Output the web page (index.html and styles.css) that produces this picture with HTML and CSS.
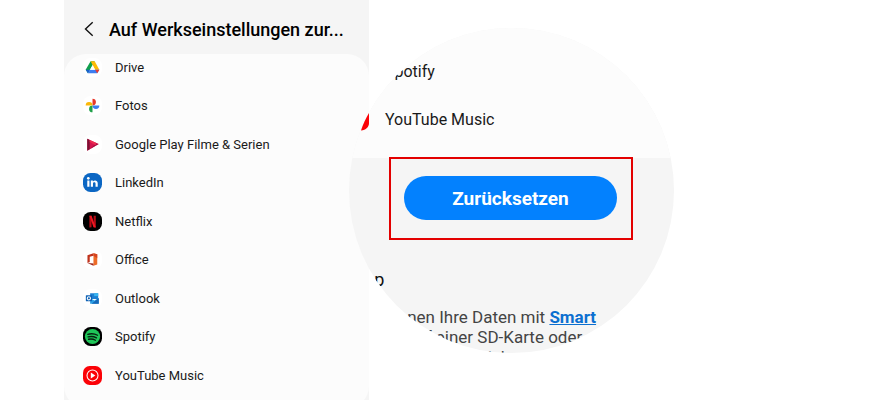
FILE: index.html
```html
<!DOCTYPE html>
<html lang="de">
<head>
    <meta charset="utf-8">
    <title>Auf Werkseinstellungen zurücksetzen</title>
    <link rel="stylesheet" href="styles.css">
</head>
<body>
    <main class="stage">

        <section class="phone">
            <header class="header">
                <button class="back" type="button" aria-label="Zurück">
                    <svg width="10" height="16" viewBox="0 0 10 16"><path d="M8.700 1.200 1.500 8l7.200 6.800" fill="none" stroke="#111" stroke-width="1.400"/></svg>
                </button>
                <h1 class="title">Auf Werkseinstellungen zur...</h1>
            </header>

            <div class="panel">
                <ul class="apps">
                    <li class="app">
                        <svg class="icon" viewBox="0 0 20 20">
                            <rect width="20" height="20" rx="8" fill="#fff"/>
                            <path d="M8 3.500h4.300L7.300 12.300 5.200 16 2.800 12.300z" fill="#11a04d"/>
                            <path d="M8 3.500h4.300L17.200 12.300h-4.400z" fill="#fdba04"/>
                            <path d="M7.200 12.300H17.200L15 16H5.200z" fill="#3c7df0"/>
                            <path d="M2.800 12.300h4.400L5.200 16z" fill="#1a5fd0"/>
                            <path d="M12.800 12.300h4.400L15 16z" fill="#ea3a2d"/>
                            <path d="M10.100 7.600 12.700 12.300H7.500z" fill="#fff"/>
                        </svg>
                        <span>Drive</span>
                    </li>
                    <li class="app">
                        <svg class="icon" viewBox="0 0 20 20">
                            <rect width="20" height="20" rx="8" fill="#fff"/>
                            <path d="M10 2.800a3.600 3.600 0 0 1 0 7.200z" fill="#e8372b"/>
                            <path d="M17.200 10a3.600 3.600 0 0 1-7.200 0z" fill="#3b7df0"/>
                            <path d="M10 17.200a3.600 3.600 0 0 1 0-7.200z" fill="#20a04a"/>
                            <path d="M2.800 10a3.600 3.600 0 0 1 7.200 0z" fill="#fbb808"/>
                        </svg>
                        <span>Fotos</span>
                    </li>
                    <li class="app">
                        <svg class="icon" viewBox="0 0 20 20">
                            <rect width="20" height="20" rx="8" fill="#fff"/>
                            <path d="M4.500 4 16.500 9.500 4.500 16.500z" fill="#d5144f"/>
                            <path d="M4.500 4 7 5.200v9.800L4.500 16.500z" fill="#7b1233"/>
                            <path d="M7 15 13.500 9l3 .5z" fill="#a30f40"/>
                            <path d="M7 5.200l6.500 3V11L7 7z" fill="#ee2b50"/>
                        </svg>
                        <span>Google Play Filme &amp; Serien</span>
                    </li>
                    <li class="app">
                        <svg class="icon" viewBox="0 0 20 20">
                            <rect width="20" height="20" rx="8" fill="#0b66c3"/>
                            <circle cx="5.600" cy="5.600" r="1.400" fill="#fff"/>
                            <path d="M4.500 8h2.300v6.500H4.500zM8.200 8h2.200v1c1.300-2 5.100-1.600 5.100 1.700v3.800h-2.300v-3.400c0-2-2.700-1.900-2.700 0v3.400H8.200z" fill="#fff"/>
                        </svg>
                        <span>LinkedIn</span>
                    </li>
                    <li class="app">
                        <svg class="icon" viewBox="0 0 20 20">
                            <rect width="20" height="20" rx="8" fill="#000"/>
                            <path d="M6.700 4H9v12l-2.300.3zM11.200 4h2.300v12.300l-2.300-.3z" fill="#b50b14"/>
                            <path d="M6.700 4H9l4.500 12.300-2.400-.3z" fill="#ee1722"/>
                        </svg>
                        <span>Netflix</span>
                    </li>
                    <li class="app">
                        <svg class="icon" viewBox="0 0 20 20">
                            <rect width="20" height="20" rx="8" fill="#fff"/>
                            <path d="M11 3.300 4.700 5.600v8.200l2.400-1.200V7.200L11 6z" fill="#c0331c"/>
                            <path d="M11 3.300l4 1.300v10.600l-4 1.300z" fill="#ed6c28"/>
                            <path d="M11 3.300l4 1.300v4L11 6z" fill="#d54420"/>
                            <path d="M4.700 13.800 11 14.300v2.200z" fill="#9b2118"/>
                        </svg>
                        <span>Office</span>
                    </li>
                    <li class="app">
                        <svg class="icon" viewBox="0 0 20 20">
                            <rect width="20" height="20" rx="8" fill="#fff"/>
                            <path d="M7.500 4.500H16v6H7.500z" fill="#1d7fd2"/>
                            <path d="M11.700 4.500H16v3h-4.300z" fill="#37b5f0"/>
                            <path d="M7.500 9.500 12 12l4.600-2.500v6H7.500z" fill="#2aa0e6"/>
                            <path d="M16.600 9.500v6H9z" fill="#1768b8"/>
                            <rect x="3" y="6.500" width="6.500" height="6.500" rx=".6" fill="#0f62b5"/>
                            <circle cx="6.200" cy="9.800" r="1.700" fill="none" stroke="#fff" stroke-width="1.100"/>
                        </svg>
                        <span>Outlook</span>
                    </li>
                    <li class="app">
                        <svg class="icon" viewBox="0 0 20 20">
                            <rect width="20" height="20" rx="8" fill="#000"/>
                            <circle cx="10" cy="10" r="8" fill="#1fc659"/>
                            <path d="M5 7.700c3.500-1 7.200-.7 10.300 1M5.400 10.400c3-.8 6-.5 8.800 1M5.900 12.900c2.500-.6 5-.3 7.200 1" fill="none" stroke="#06210f" stroke-width="1.400" stroke-linecap="round"/>
                        </svg>
                        <span>Spotify</span>
                    </li>
                    <li class="app">
                        <svg class="icon" viewBox="0 0 20 20">
                            <rect width="20" height="20" rx="7" fill="#fb0207"/>
                            <circle cx="10" cy="10" r="5.800" fill="none" stroke="#fff" stroke-width="1.100"/>
                            <path d="M8.200 6.900 13 10l-4.800 3.100z" fill="#fff"/>
                        </svg>
                        <span>YouTube Music</span>
                    </li>
                </ul>
            </div>
        </section>

        <!-- magnified end of the list -->
        <section class="zoom">
            <div class="lens">
                <ul class="lens-apps">
                    <li>Spotify</li>
                    <li>YouTube Music</li>
                </ul>
                <div class="highlight">
                    <button class="reset" type="button">Zurücksetzen</button>
                </div>
                <h2 class="tip-title">Tipp</h2>
                <p class="tip">
                    Sie können Ihre Daten mit <a href="#">Smart</a><br>
                    Switch auf einer SD-Karte oder<br>
                    Ihrem Computer sichern.
                </p>
            </div>
            <svg class="sliver" width="8" height="18" viewBox="0 0 8 18"><path d="M8 0v10c0 4-3 7-8 7.500C2 11 5 5 8 0z" fill="#fb0207"/></svg>
        </section>

    </main>
</body>
</html>
```

FILE: styles.css
```css
body {
    margin: 0;
    background: #fff;
    color: #1a1a1a;
    font-family: Roboto, "Liberation Sans", sans-serif;
    font-size: 13px;
}

ul {
    margin: 0;
    padding: 0;
    list-style: none;
}

.stage {
    display: flex;
    height: 100vh;
    overflow: hidden;
    padding-left: 64px;
}

.phone {
    display: flex;
    flex-direction: column;
    flex: 0 0 305px;
    min-width: 0;
    background: #f5f5f5;
}

.header {
    display: flex;
    align-items: center;
    gap: 15px;
    height: 54px;
    padding: 4px 20px 0;
    box-sizing: border-box;
}

.back {
    display: flex;
    padding: 0;
    border: none;
    background: none;
    cursor: pointer;
}

.title {
    margin: 0;
    white-space: nowrap;
    color: #000;
    font-size: 18px;
    font-weight: 500;
}

.panel {
    display: flex;
    flex: 1;
    margin-bottom: -8px;
    padding: 0 19px 20px;
    border-radius: 22px;
    background: #fcfcfc;
}

.apps {
    display: flex;
    flex: 1;
    flex-direction: column;
    justify-content: space-between;
}

.app {
    display: flex;
    align-items: center;
    gap: 13px;
    height: 26px;
}

.icon {
    width: 19px;
    height: 19px;
}

.zoom {
    position: relative;
    flex: none;
    margin: 28px 0 0 -20px;
}

.lens {
    width: 325px;
    height: 325px;
    overflow: hidden;
    border-radius: 50%;
    background: #f5f5f5;
}

.lens-apps {
    height: 110px;
    padding: 20px 0 0 36px;
    background: #fcfcfc;
    font-size: 16px;
    line-height: 48px;
}

.highlight {
    display: flex;
    margin: -1px 41px 0 40px;
    padding: 17px 14px 18px 13px;
    border: 2px solid #e30000;
}

.reset {
    flex: 1;
    height: 44px;
    padding: 0;
    border: none;
    border-radius: 22px;
    background: #0381fe;
    color: #fff;
    font-family: inherit;
    font-size: 19px;
    font-weight: 700;
    cursor: pointer;
}

.tip-title {
    margin: 28px 0 0;
    color: #111;
    font-size: 18px;
    font-weight: 400;
    line-height: 24px;
}

.tip {
    margin: 15px 0 0 3px;
    color: #444;
    font-size: 17px;
    line-height: 20px;
    white-space: nowrap;
}

.tip a {
    color: #0b6fd0;
    font-weight: 700;
}

.sliver {
    position: absolute;
    top: 85px;
    left: 12px;
}
```
